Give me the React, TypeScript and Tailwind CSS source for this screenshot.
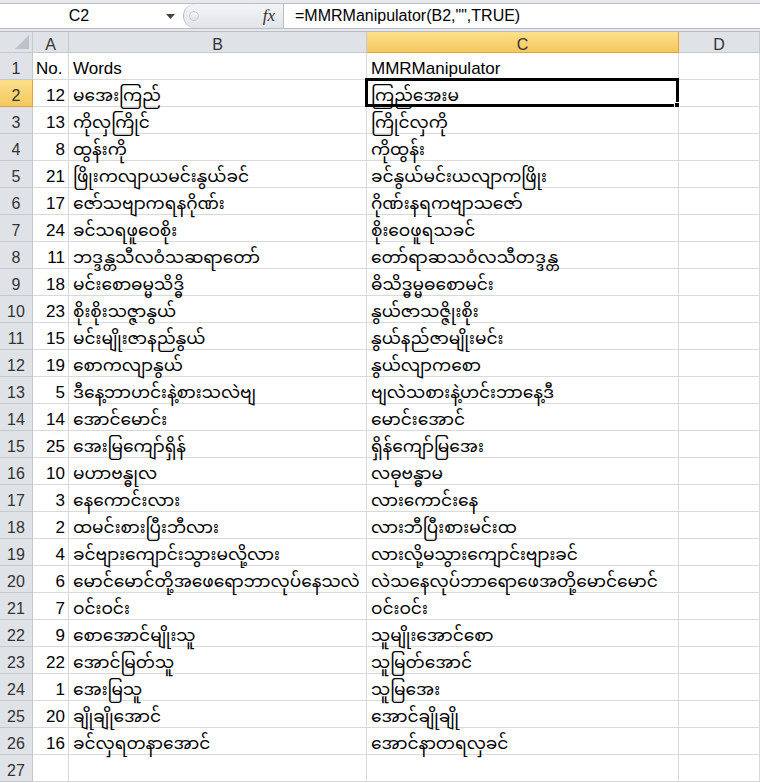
import type { JSX } from 'react';

/**
 * One data row: the number, the source words and the manipulated result.
 */
type Row = {
  no: number;
  words: string;
  result: string;
};

const ROWS: Row[] = [
  { no: 12, words: 'မအေးကြည်', result: 'ကြည်အေးမ' },
  { no: 13, words: 'ကိုလှကြိုင်', result: 'ကြိုင်လှကို' },
  { no: 8, words: 'ထွန်းကို', result: 'ကိုထွန်း' },
  { no: 21, words: 'ဖြိုးကလျာယမင်းနွယ်ခင်', result: 'ခင်နွယ်မင်းယလျာကဖြိုး' },
  { no: 17, words: 'ဇော်သဗျာကရနဂိုဏ်း', result: 'ဂိုဏ်းနရကဗျာသဇော်' },
  { no: 24, words: 'ခင်သရဖူဝေစိုး', result: 'စိုးဝေဖူရသခင်' },
  { no: 11, words: 'ဘဒ္ဒန္တသီလဝံသဆရာတော်', result: 'တော်ရာဆသဝံလသီတဒ္ဒန္တ' },
  { no: 18, words: 'မင်းစောဓမ္မသိဒ္ဓိ', result: 'ဓိသိဒ္ဓမ္မဓစောမင်း' },
  { no: 23, words: 'စိုးစိုးသဇ္ဇာနွယ်', result: 'နွယ်ဇာသဇ္ဇိုးစိုး' },
  { no: 15, words: 'မင်းမျိုးဇာနည်နွယ်', result: 'နွယ်နည်ဇာမျိုးမင်း' },
  { no: 19, words: 'စောကလျာနွယ်', result: 'နွယ်လျာကစော' },
  { no: 5, words: 'ဒီနေ့ဘာဟင်းနဲ့စားသလဲဗျ', result: 'ဗျလဲသစားနဲ့ဟင်းဘာနေ့ဒီ' },
  { no: 14, words: 'အောင်မောင်း', result: 'မောင်းအောင်' },
  { no: 25, words: 'အေးမြကျော်ရှိန်', result: 'ရှိန်ကျော်မြအေး' },
  { no: 10, words: 'မဟာဗန္ဓုလ', result: 'လဓုဗန္ဓာမ' },
  { no: 3, words: 'နေကောင်းလား', result: 'လားကောင်းနေ' },
  { no: 2, words: 'ထမင်းစားပြီးဘီလား', result: 'လားဘီပြီးစားမင်းထ' },
  { no: 4, words: 'ခင်ဗျားကျောင်းသွားမလို့လား', result: 'လားလို့မသွားကျောင်းဗျားခင်' },
  { no: 6, words: 'မောင်မောင်တို့အဖေရောဘာလုပ်နေသလဲ', result: 'လဲသနေလုပ်ဘာရောဖေအတို့မောင်မောင်' },
  { no: 7, words: 'ဝင်းဝင်း', result: 'ဝင်းဝင်း' },
  { no: 9, words: 'စောအောင်မျိုးသူ', result: 'သူမျိုးအောင်စော' },
  { no: 22, words: 'အောင်မြတ်သူ', result: 'သူမြတ်အောင်' },
  { no: 1, words: 'အေးမြသူ', result: 'သူမြအေး' },
  { no: 20, words: 'ချိုချိုအောင်', result: 'အောင်ချိုချို' },
  { no: 16, words: 'ခင်လှရတနာအောင်', result: 'အောင်နာတရလှခင်' }
];

const FONT = "font-['Liberation_Sans','Noto_Sans_Myanmar','Myanmar_Text','Padauk',sans-serif]";

const colHeader =
  'flex items-center justify-center border-r border-b border-[#c5c9cf] bg-[#dfe3e8] pt-[5px] text-[16px] text-[#333]';
const colHeaderActive =
  'flex items-center justify-center border-r border-b border-[#e2a33f] bg-gradient-to-b from-[#fbe08a] to-[#f5c85e] pt-[5px] text-[16px] text-[#333]';
const rowHeader =
  'flex items-center justify-center border-r border-b border-[#c5c9cf] bg-[#dfe3e8] pt-[6px] text-[16px] text-[#333]';
const rowHeaderActive =
  'flex items-center justify-center border-r border-b border-[#e2a33f] bg-gradient-to-b from-[#fbe08a] to-[#f5c85e] pt-[6px] text-[16px] text-[#333]';
const cell = 'flex items-center border-r border-b border-[#d9d9d9] pt-[6px] text-[17px] text-black';

/**
 * Excel-like sheet with a formula bar and the Myanmar word table.
 */
export default function App(): JSX.Element {
  return (
    <div className={`h-[783px] w-[760px] overflow-hidden bg-white ${FONT}`}>
      {/* formula bar */}
      <div className="h-[3px] bg-[#e6e8eb]" />
      <div className="flex h-[26px] border-y border-[#b8bec6] bg-white">
        <div className="flex w-[183px] shrink-0 items-center">
          <span className="w-[158px] text-center text-[16px] text-black">C2</span>
          <svg width="9" height="5" viewBox="0 0 9 5" className="ml-[8px]">
            <polygon points="0,0 9,0 4.5,5" fill="#444" />
          </svg>
        </div>
        <div className="flex w-[100px] shrink-0 items-center rounded-l-full border-l border-[#b8bec6] bg-gradient-to-b from-[#f3f4f6] to-[#e1e4e8]">
          <span className="ml-[5px] h-[10px] w-[10px] rounded-full border border-[#c8ccd2] bg-gradient-to-b from-[#fafafa] to-[#dcdfe3]" />
          <span className="ml-auto mr-[8px] font-['Liberation_Serif',serif] text-[17px] italic text-[#333]">
            fx
          </span>
        </div>
        <div className="flex flex-1 items-center border-l border-[#b8bec6] pl-[11px] text-[16px] text-black">
          =MMRManipulator(B2,"",TRUE)
        </div>
      </div>
      <div className="h-[3px] border-b border-[#b8bec6] bg-[#e6e8eb]" />

      {/* sheet */}
      <div className="grid grid-cols-[33px_36px_298px_312px_1fr] grid-rows-[21px_repeat(27,27px)]">
        <div className="flex items-end justify-end border-r border-b border-[#c5c9cf] bg-[#dfe3e8] p-[3px]">
          <svg width="14" height="14" viewBox="0 0 14 14">
            <polygon points="14,0 14,14 0,14" fill="#bcc2c9" />
          </svg>
        </div>
        <div className={colHeader}>A</div>
        <div className={colHeader}>B</div>
        <div className={colHeaderActive}>C</div>
        <div className={colHeader}>D</div>

        <div className={rowHeader}>1</div>
        <div className={`${cell} pl-[3px]`}>No.</div>
        <div className={`${cell} pl-[4px]`}>Words</div>
        <div className={`${cell} pl-[4px]`}>MMRManipulator</div>
        <div className={cell} />

        {ROWS.map((row, i) => (
          <RowCells key={row.no} index={i + 2} row={row} />
        ))}

        <div className={rowHeader}>27</div>
        <div className={cell} />
        <div className={cell} />
        <div className={cell} />
        <div className={cell} />
      </div>
    </div>
  );
}

/**
 * One sheet row; row 2 holds the active cell C2.
 */
function RowCells({ index, row }: { index: number; row: Row }): JSX.Element {
  const active = index === 2;
  return (
    <>
      <div className={active ? rowHeaderActive : rowHeader}>{index}</div>
      <div className={`${cell} justify-end pr-[3px]`}>{row.no}</div>
      <div className={`${cell} whitespace-nowrap pl-[4px]`}>{row.words}</div>
      <div className={`${cell} relative whitespace-nowrap pl-[4px]`}>
        {row.result}
        {active ? (
          <span className="pointer-events-none absolute -top-[2px] -left-[2px] -right-px -bottom-px border-[3px] border-black">
            <span className="absolute -right-[4px] -bottom-[4px] h-[6px] w-[6px] border border-white bg-black" />
          </span>
        ) : null}
      </div>
      <div className={cell} />
    </>
  );
}
